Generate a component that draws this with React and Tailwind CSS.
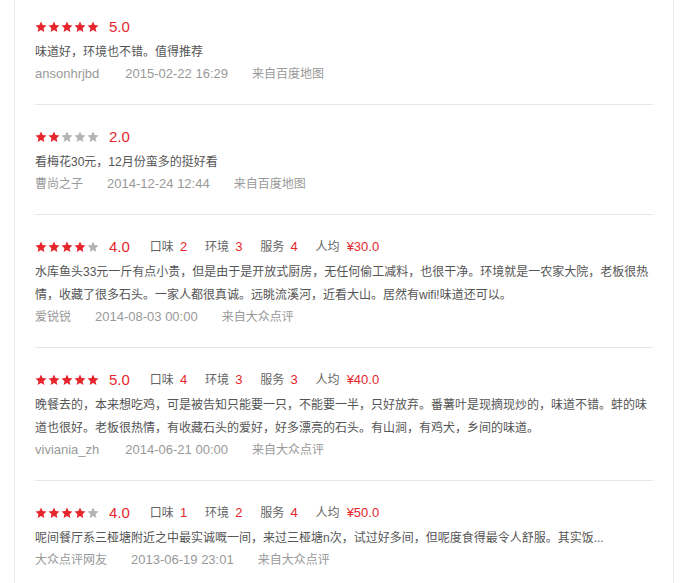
import React from 'react'

const reviews = [
  {
    score: 5,
    text: '味道好，环境也不错。值得推荐',
    user: 'ansonhrjbd',
    latinUser: true,
    time: '2015-02-22 16:29',
    from: '来自百度地图',
  },
  {
    score: 2,
    text: '看梅花30元，12月份蛮多的挺好看',
    user: '曹尚之子',
    time: '2014-12-24 12:44',
    from: '来自百度地图',
  },
  {
    score: 4,
    sub: { taste: 2, env: 3, service: 4, price: '¥30.0' },
    text: '水库鱼头33元一斤有点小贵，但是由于是开放式厨房，无任何偷工减料，也很干净。环境就是一农家大院，老板很热情，收藏了很多石头。一家人都很真诚。远眺流溪河，近看大山。居然有wifi!味道还可以。',
    user: '爱锐锐',
    time: '2014-08-03 00:00',
    from: '来自大众点评',
  },
  {
    score: 5,
    sub: { taste: 4, env: 3, service: 3, price: '¥40.0' },
    text: '晚餐去的，本来想吃鸡，可是被告知只能要一只，不能要一半，只好放弃。番薯叶是现摘现炒的，味道不错。蚌的味道也很好。老板很热情，有收藏石头的爱好，好多漂亮的石头。有山涧，有鸡犬，乡间的味道。',
    user: 'viviania_zh',
    latinUser: true,
    time: '2014-06-21 00:00',
    from: '来自大众点评',
  },
  {
    score: 4,
    sub: { taste: 1, env: 2, service: 4, price: '¥50.0' },
    text: '呢间餐厅系三桠塘附近之中最实诚嘅一间，来过三桠塘n次，试过好多间，但呢度食得最令人舒服。其实饭...',
    user: '大众点评网友',
    time: '2013-06-19 23:01',
    from: '来自大众点评',
  },
]

const Star = ({ on }) => (
  <svg viewBox="0 0 24 24" className={on ? 'w-[12px] h-[12px] fill-[#e5262c]' : 'w-[12px] h-[12px] fill-[#b3b3b3]'}>
    <polygon points="12,1 15.2,8.2 23,9 17.1,14.3 18.8,22 12,18 5.2,22 6.9,14.3 1,9 8.8,8.2" />
  </svg>
)

const Stars = ({ score }) => (
  <div className="flex items-center gap-[1px]">
    {[1, 2, 3, 4, 5].map((i) => (
      <Star key={i} on={i <= score} />
    ))}
  </div>
)

const SubRating = ({ label, value }) => (
  <span className="mr-[18px] flex items-center">
    <span className="text-[12px] text-[#666]">{label}</span>
    <span className="ml-[6px] text-[13px] text-[#e5262c]">{value}</span>
  </span>
)

const Review = ({ r, first }) => (
  <div className={first ? 'pt-[15px] pb-[20px] border-b border-[#e8e8e8]' : 'pt-[20px] pb-[20px] border-b border-[#e8e8e8]'}>
    <div className="flex items-center h-[24px]">
      <Stars score={r.score} />
      <span className="ml-[10px] text-[15px] text-[#e5262c]">{r.score}.0</span>
      {r.sub && (
        <div className="ml-[20px] flex items-center">
          <SubRating label="口味" value={r.sub.taste} />
          <SubRating label="环境" value={r.sub.env} />
          <SubRating label="服务" value={r.sub.service} />
          <span className="flex items-center">
            <span className="text-[12px] text-[#666]">人均</span>
            <span className="ml-[7px] text-[13px] text-[#e5262c]">{r.sub.price}</span>
          </span>
        </div>
      )}
    </div>
    <p className="pt-[2px] text-[12px] leading-[23px] text-[#555]">{r.text}</p>
    <div className="flex items-center h-[20px] text-[#999]">
      <span className={r.latinUser ? 'text-[13px]' : 'text-[12px]'}>{r.user}</span>
      <span className={r.latinUser ? 'ml-[26px] text-[13px]' : 'ml-[24px] text-[13px]'}>{r.time}</span>
      <span className="ml-[24px] text-[12px]">{r.from}</span>
    </div>
  </div>
)

export default function App() {
  return (
    <div className="min-h-screen bg-white font-['Liberation_Sans','Noto_Sans_CJK_SC',sans-serif]">
      <div className="ml-[14px] w-[660px] min-h-screen border-x border-[#e8e8e8] px-[20px]">
        {reviews.map((r, i) => (
          <Review key={i} r={r} first={i === 0} />
        ))}
      </div>
    </div>
  )
}
